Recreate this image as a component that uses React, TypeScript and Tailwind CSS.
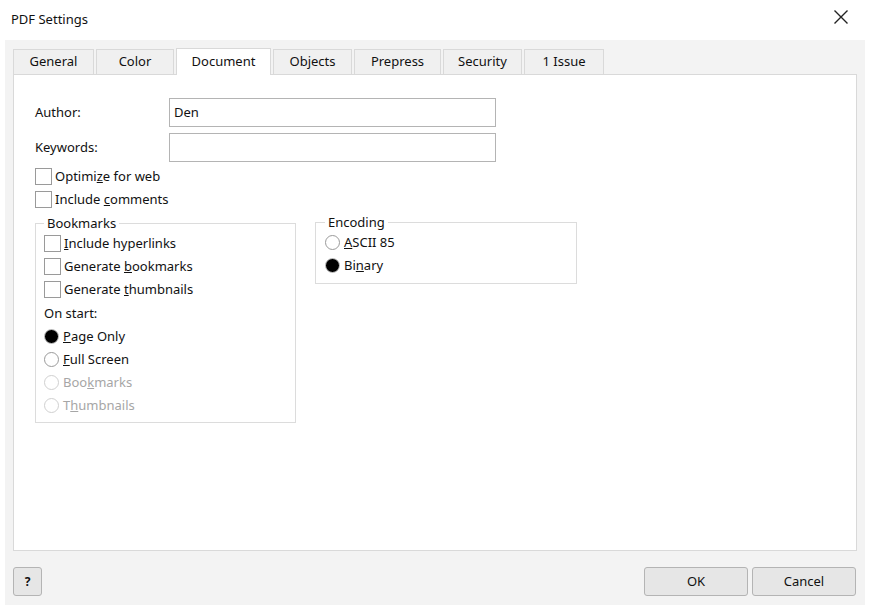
import type { ReactNode } from 'react';

// PDF export settings dialog, "Document" tab
const tabs = ['General', 'Color', 'Document', 'Objects', 'Prepress', 'Security', '1 Issue'];
const tabWidths: Record<string, string> = {
  General: 'w-[81px]',
  Color: 'w-[78px]',
  Document: 'w-[95px]',
  Objects: 'w-[79px]',
  Prepress: 'w-[87px]',
  Security: 'w-[79px]',
  '1 Issue': 'w-[80px]',
};

function Checkbox({ children }: { children: ReactNode }) {
  return (
    <label className="flex items-center h-[23px] gap-[3px]">
      <span className="w-[17px] h-[17px] border border-[#9a9a9a] bg-white shrink-0" />
      <span>{children}</span>
    </label>
  );
}

function Radio({ children, checked = false, disabled = false }: { children: ReactNode; checked?: boolean; disabled?: boolean }) {
  return (
    <label className={`flex items-center h-[23px] gap-[4px] ${disabled ? 'text-[#a6a6a6]' : ''}`}>
      {checked ? (
        <span className="w-[15px] h-[15px] rounded-full bg-black border border-[#c8c8c8] shrink-0" />
      ) : (
        <span
          className={`w-[15px] h-[15px] rounded-full bg-white border shrink-0 ${
            disabled ? 'border-[#d0d0d0]' : 'border-[#9a9a9a]'
          }`}
        />
      )}
      <span>{children}</span>
    </label>
  );
}

export default function App() {
  return (
    <div className="w-[870px] h-[605px] bg-white flex flex-col text-[13px] text-[#111] font-['Noto_Sans',sans-serif]">
      {/* title bar */}
      <div className="h-[40px] flex items-center justify-between pl-[11px] pr-[21px] shrink-0">
        <span>PDF Settings</span>
        <svg width="16" height="16" viewBox="0 0 16 16" className="mt-[-6px]">
          <path d="M1.5 1.5 L14.5 14.5 M14.5 1.5 L1.5 14.5" stroke="#222" strokeWidth="1.4" />
        </svg>
      </div>

      <div className="flex-1 mx-[5px] bg-[#f3f3f3] px-[8px] pt-[8px] flex flex-col">
        {/* tab strip */}
        <div className="flex items-end gap-[2px] h-[26px]">
          {tabs.map((t) =>
            t === 'Document' ? (
              <div
                key={t}
                className={`${tabWidths[t]} h-[27px] -mb-px relative z-10 bg-white border border-b-0 border-[#d9d9d9] flex items-center justify-center`}
              >
                {t}
              </div>
            ) : (
              <div
                key={t}
                className={`${tabWidths[t]} h-[25px] bg-[#f0f0f0] border border-b-0 border-[#d9d9d9] flex items-center justify-center`}
              >
                {t}
              </div>
            ),
          )}
        </div>

        {/* tab page */}
        <div className="flex-1 bg-white border border-[#d9d9d9] pl-[21px] pt-[23px]">
          <div className="flex items-center h-[29px]">
            <span className="w-[134px]">Author:</span>
            <div className="w-[327px] h-[29px] border border-[#b4b4b4] flex items-center px-[4px]">Den</div>
          </div>
          <div className="flex items-center h-[29px] mt-[6px]">
            <span className="w-[134px]">Keywords:</span>
            <div className="w-[327px] h-[29px] border border-[#b4b4b4]" />
          </div>

          <div className="mt-[3px]">
            <Checkbox>
              Optimi<u>z</u>e for web
            </Checkbox>
            <Checkbox>
              Include <u>c</u>omments
            </Checkbox>
          </div>

          <div className="flex items-start gap-[19px] mt-[2px]">
            <fieldset className="w-[261px] h-[210px] border border-[#dcdcdc]">
              <legend className="ml-[8px] px-[3px] leading-[20px]">Bookmarks</legend>
              <div className="-mt-[1px] pl-[8px]">
                <Checkbox>
                  <u>I</u>nclude hyperlinks
                </Checkbox>
                <Checkbox>
                  Generate <u>b</u>ookmarks
                </Checkbox>
                <Checkbox>
                  Generate <u>t</u>humbnails
                </Checkbox>
                <div className="h-[23px] flex items-center mt-[1px]">On start:</div>
                <Radio checked>
                  <u>P</u>age Only
                </Radio>
                <Radio>
                  <u>F</u>ull Screen
                </Radio>
                <Radio disabled>
                  Boo<u>k</u>marks
                </Radio>
                <Radio disabled>
                  T<u>h</u>umbnails
                </Radio>
              </div>
            </fieldset>

            <fieldset className="w-[262px] h-[72px] border border-[#dcdcdc] -mt-[1px]">
              <legend className="ml-[9px] px-[3px] leading-[20px]">Encoding</legend>
              <div className="-mt-[1px] pl-[9px]">
                <Radio>
                  <u>A</u>SCII 85
                </Radio>
                <Radio checked>
                  Bi<u>n</u>ary
                </Radio>
              </div>
            </fieldset>
          </div>
        </div>

        {/* footer buttons */}
        <div className="h-[54px] flex items-start justify-between shrink-0 pt-[16px]">
          <button className="w-[29px] h-[29px] bg-[#e6e6e6] border border-[#b4b4b4] rounded-[3px] text-[12px] font-bold">
            ?
          </button>
          <div className="flex gap-[4px] mr-[1px]">
            <button className="w-[104px] h-[29px] bg-[#e6e6e6] border border-[#b4b4b4] rounded-[3px]">OK</button>
            <button className="w-[104px] h-[29px] bg-[#e6e6e6] border border-[#b4b4b4] rounded-[3px]">Cancel</button>
          </div>
        </div>
      </div>
    </div>
  );
}
